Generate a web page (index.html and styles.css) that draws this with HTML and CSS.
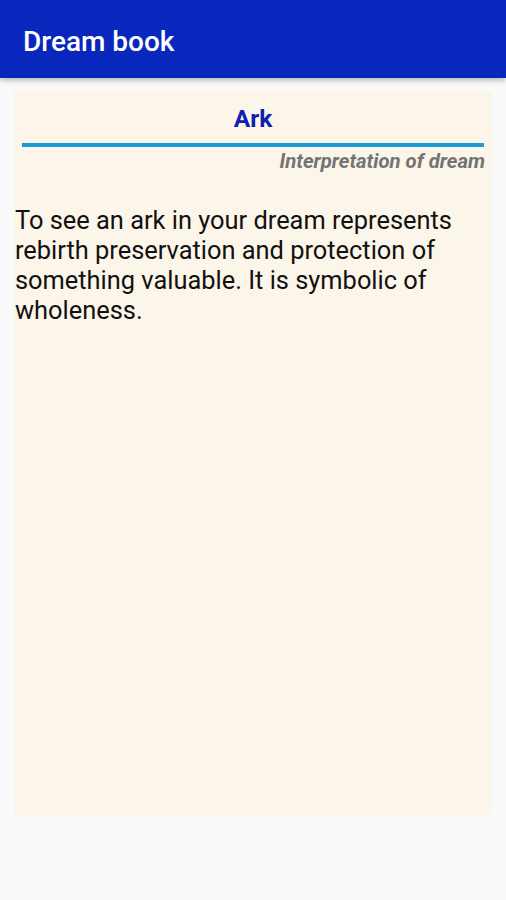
FILE: index.html
```html
<!DOCTYPE html>
<html lang="en">
<head>
    <meta charset="UTF-8">
    <meta name="viewport" content="width=device-width, initial-scale=1.0">
    <title>Dream book</title>
    <link rel="stylesheet" href="styles.css">
</head>
<body>

<div class="app-bar">
    <h1>Dream book</h1>
</div>

<div class="content">
    <div class="card">
        <h2 class="dream-title">Ark</h2>
        <div class="subtitle">Interpretation of dream</div>
        <p class="dream-text">
            To see an ark in your dream represents rebirth preservation and protection of something valuable. It is symbolic of wholeness.
        </p>
    </div>
</div>

</body>
</html>
```

FILE: styles.css
```css
body {
    font-family: Roboto, 'Noto Sans', sans-serif;
    background-color: #fafafa;
    margin: 0;
    padding: 0;
    height: 900px;
    overflow: hidden;
}

.app-bar {
    background-color: #0a27bd;
    height: 78px;
    box-sizing: border-box;
    display: flex;
    align-items: center;
    padding: 4px 23px 0;
    box-shadow: 0 2px 6px rgba(0, 0, 0, 0.3);
    position: relative;
}

.app-bar h1 {
    margin: 0;
    color: #fff;
    font-size: 28px;
    font-weight: 500;
}

.content {
    padding: 13px 14px 0 14px;
}

.card {
    background-color: #fcf5e9;
    height: 724px;
    padding: 0 1px;
}

.dream-title {
    margin: 0 7px;
    padding: 13px 0 10px;
    line-height: 29px;
    text-align: center;
    color: #0d20b0;
    font-size: 24.5px;
    font-weight: bold;
    border-bottom: 4px solid #1b9bd5;
}

.subtitle {
    text-align: right;
    margin: 3px 6px 0;
    line-height: 23px;
    color: #737373;
    font-size: 20.3px;
    font-weight: bold;
    font-style: italic;
}

.dream-text {
    margin: 32px 0 0;
    color: #111;
    font-size: 25.4px;
    line-height: 30px;
}
```
